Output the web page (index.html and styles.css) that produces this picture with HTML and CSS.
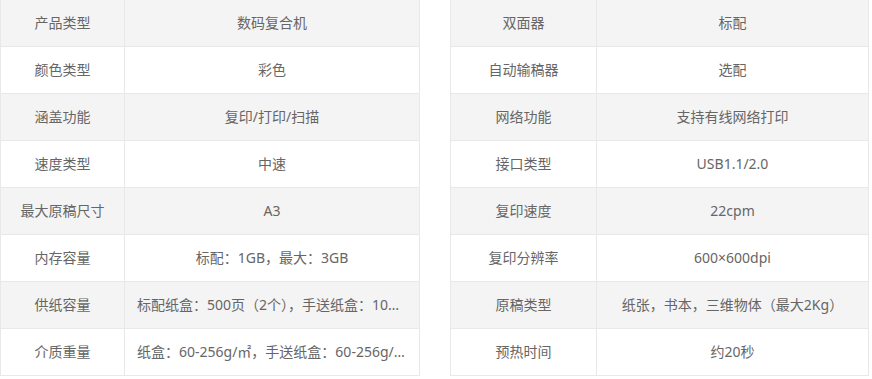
FILE: index.html
```html
<!DOCTYPE html>
<html lang="zh">
<head>
<meta charset="utf-8">
<link rel="stylesheet" href="styles.css">
</head>
<body>
<div class="wrap">
  <div class="spec spec-left">
    <div class="row"><div class="k">产品类型</div><div class="v">数码复合机</div></div>
    <div class="row"><div class="k">颜色类型</div><div class="v">彩色</div></div>
    <div class="row"><div class="k">涵盖功能</div><div class="v">复印/打印/扫描</div></div>
    <div class="row"><div class="k">速度类型</div><div class="v">中速</div></div>
    <div class="row"><div class="k">最大原稿尺寸</div><div class="v">A3</div></div>
    <div class="row"><div class="k">内存容量</div><div class="v">标配：1GB，最大：3GB</div></div>
    <div class="row"><div class="k">供纸容量</div><div class="v">标配纸盒：500页（2个），手送纸盒：100页</div></div>
    <div class="row"><div class="k">介质重量</div><div class="v">纸盒：60-256g/㎡，手送纸盒：60-256g/㎡</div></div>
  </div>
  <div class="spec spec-right">
    <div class="row"><div class="k">双面器</div><div class="v">标配</div></div>
    <div class="row"><div class="k">自动输稿器</div><div class="v">选配</div></div>
    <div class="row"><div class="k">网络功能</div><div class="v">支持有线网络打印</div></div>
    <div class="row"><div class="k">接口类型</div><div class="v">USB1.1/2.0</div></div>
    <div class="row"><div class="k">复印速度</div><div class="v">22cpm</div></div>
    <div class="row"><div class="k">复印分辨率</div><div class="v">600×600dpi</div></div>
    <div class="row"><div class="k">原稿类型</div><div class="v">纸张，书本，三维物体（最大2Kg）</div></div>
    <div class="row"><div class="k">预热时间</div><div class="v">约20秒</div></div>
  </div>
</div>
</body>
</html>
```
FILE: styles.css
```css
html, body {
  margin: 0;
  padding: 0;
  background: #fff;
}
body {
  font-family: "Noto Sans", "Noto Sans CJK SC", sans-serif;
  font-size: 14px;
  color: #666;
}
.wrap {
  display: flex;
  gap: 30px;
}
.spec {
  border-left: 1px solid #e8e8e8;
  box-sizing: border-box;
}
.spec-left { width: 420px; }
.spec-right { width: 419px; }
.row {
  display: grid;
  height: 47px;
  box-sizing: border-box;
  border-bottom: 1px solid #e8e8e8;
}
.spec-left .row { grid-template-columns: 124px 1fr; }
.spec-right .row { grid-template-columns: 146px 1fr; }
.row:nth-child(odd) { background: #f4f4f4; }
.k, .v {
  border-right: 1px solid #e8e8e8;
  line-height: 46px;
  text-align: center;
  white-space: nowrap;
  overflow: hidden;
  text-overflow: ellipsis;
  padding: 0 12px;
  min-width: 0;
}
```
